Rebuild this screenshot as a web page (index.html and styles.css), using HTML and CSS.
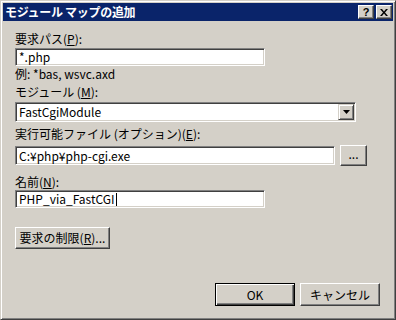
FILE: index.html
```html
<!DOCTYPE html>
<html lang="ja">
<head>
  <meta charset="UTF-8">
  <title>モジュール マップの追加</title>
  <link rel="stylesheet" href="styles.css">
</head>
<body>

  <div class="window">
    <div class="titlebar">
      <span class="title">モジュール マップの追加</span>
      <div class="caption-buttons">
        <span class="cap-btn cap-help">?</span>
        <span class="cap-btn">
          <svg width="8" height="7" viewBox="0 0 8 7"><path d="M0 0h2l2 2.5 2-2.5h2l-3 3.5 3 3.5h-2l-2-2.5-2 2.5h-2l3-3.5z" fill="#000"/></svg>
        </span>
      </div>
    </div>

    <div class="content">
      <div class="label first">要求パス(<u>P</u>):</div>
      <div class="edit edit-short">*.php</div>
      <div class="hint">例: *bas, wsvc.axd</div>

      <div class="label lbl-module">モジュール (<u>M</u>):</div>
      <div class="combo">
        <span class="combo-text">FastCgiModule</span>
        <span class="combo-btn">
          <svg width="7" height="4" viewBox="0 0 7 4"><path d="M0 0h7l-3.5 4z" fill="#000"/></svg>
        </span>
      </div>

      <div class="label lbl-exe">実行可能ファイル (オプション)(<u>E</u>):</div>
      <div class="row">
        <div class="edit edit-exe">C:¥php¥php-cgi.exe</div>
        <div class="btn btn-browse">...</div>
      </div>

      <div class="label lbl-name">名前(<u>N</u>):</div>
      <div class="edit edit-short edit-name">PHP_via_FastCGI<span class="caret"></span></div>

      <div class="btn btn-limits">要求の制限(<u>R</u>)...</div>

      <div class="footer">
        <div class="btn btn-default">OK</div>
        <div class="btn">キャンセル</div>
      </div>
    </div>
  </div>

</body>
</html>
```

FILE: styles.css
```css
* {
  box-sizing: border-box;
}

body {
  margin: 0;
  font-family: "Noto Sans CJK JP", "Liberation Sans", sans-serif;
  font-size: 12px;
  color: #000;
  background: #d4d0c8;
}

.window {
  width: 396px;
  height: 320px;
  background: #d4d0c8;
  border: 1px solid;
  border-color: #d4d0c8 #404040 #404040 #d4d0c8;
  box-shadow: inset 1px 1px #fff, inset -1px -1px #808080;
  padding: 2px;
  display: flex;
  flex-direction: column;
}

.titlebar {
  height: 18px;
  background: #0a246a;
  display: flex;
  align-items: flex-start;
  justify-content: space-between;
  padding: 2px 1px 0 2px;
}

.title {
  color: #fff;
  font-weight: bold;
  font-size: 12px;
  line-height: 14px;
  letter-spacing: -0.3px;
}

.caption-buttons {
  display: flex;
  gap: 2px;
}

.cap-btn {
  width: 16px;
  height: 14px;
  background: #d4d0c8;
  border: 1px solid;
  border-color: #fff #404040 #404040 #fff;
  box-shadow: inset -1px -1px #808080;
  display: flex;
  align-items: center;
  justify-content: center;
}

.cap-help {
  font-family: "Liberation Sans", sans-serif;
  font-weight: bold;
  font-size: 11px;
  line-height: 12px;
}

.content {
  flex: 1;
  display: flex;
  flex-direction: column;
  align-items: flex-start;
  padding: 0 13px 0 12px;
}

.label,
.hint {
  line-height: 14px;
  height: 14px;
  white-space: nowrap;
}

.label.first { margin-top: 11px; }
.hint { margin-top: 1px; }
.lbl-module { margin-top: 4px; }
.lbl-exe { margin-top: 5px; }
.lbl-name { margin-top: 9px; }

.edit {
  height: 18px;
  background: #fff;
  border: 1px solid;
  border-color: #808080 #fff #fff #808080;
  box-shadow: inset 1px 1px #404040, inset -1px -1px #d4d0c8;
  padding: 0 3px;
  line-height: 16px;
  white-space: nowrap;
  display: flex;
  align-items: center;
}

.edit-short {
  width: 250px;
  margin-top: 2px;
}

.edit-name {
  margin-top: 1px;
}

.caret {
  display: inline-block;
  width: 1px;
  height: 13px;
  background: #000;
  margin-left: 1px;
}

.combo {
  width: 341px;
  height: 20px;
  margin-top: 3px;
  background: #fff;
  border: 1px solid;
  border-color: #808080 #fff #fff #808080;
  box-shadow: inset 1px 1px #404040, inset -1px -1px #d4d0c8;
  padding: 1px;
  display: flex;
  align-items: center;
}

.combo-text {
  flex: 1;
  padding-left: 2px;
  line-height: 16px;
}

.combo-btn {
  width: 16px;
  height: 16px;
  background: #d4d0c8;
  border: 1px solid;
  border-color: #d4d0c8 #404040 #404040 #d4d0c8;
  box-shadow: inset 1px 1px #fff, inset -1px -1px #808080;
  display: flex;
  align-items: center;
  justify-content: center;
}

.row {
  margin-top: 4px;
  display: flex;
  gap: 5px;
}

.edit-exe {
  width: 320px;
  height: 19px;
  margin-top: 1px;
}

.btn {
  height: 23px;
  background: #d4d0c8;
  border: 1px solid;
  border-color: #fff #404040 #404040 #fff;
  box-shadow: inset -1px -1px #808080;
  display: flex;
  align-items: center;
  justify-content: center;
  line-height: 14px;
  white-space: nowrap;
}

.btn-browse {
  width: 27px;
  height: 21px;
  padding-bottom: 4px;
}

.btn-limits {
  width: 95px;
  height: 22px;
  margin-top: 19px;
}

.footer {
  align-self: stretch;
  margin-top: 34px;
  display: flex;
  justify-content: flex-end;
  gap: 5px;
}

.footer .btn {
  width: 80px;
}

.btn-default {
  border-color: #000;
  box-shadow: inset 1px 1px #fff, inset -1px -1px #404040, inset -2px -2px #808080;
}
```
